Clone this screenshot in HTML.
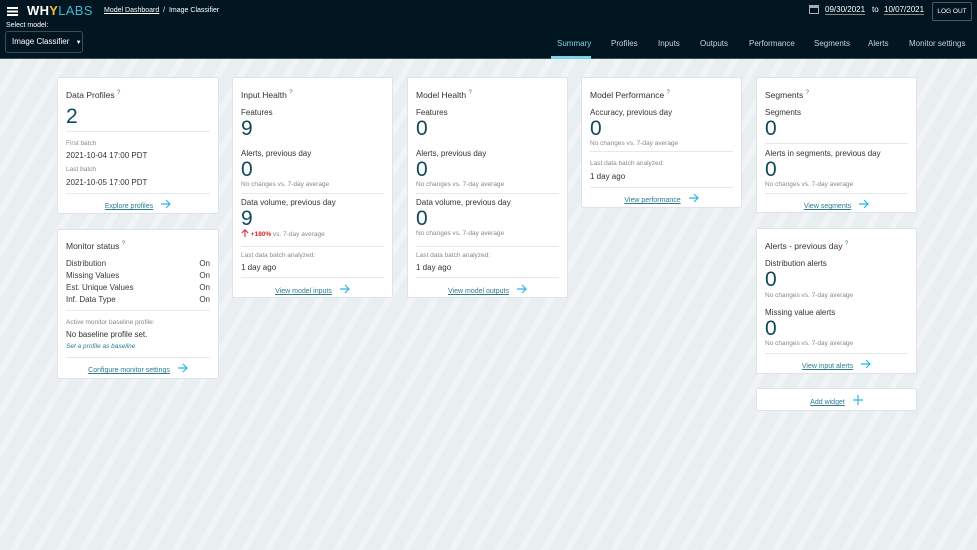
<!DOCTYPE html><html><head><style>
*{margin:0;padding:0;box-sizing:border-box}
body{width:977px;height:550px;overflow:hidden;font-family:"Liberation Sans",sans-serif;background:#e9eff1;position:relative;color:#3a3a3a}
.bg{position:absolute;left:0;top:59px;width:977px;height:491px;background:repeating-linear-gradient(120deg,rgba(255,255,255,0) 0 14px,rgba(255,255,255,.35) 14px 20px)}
.hd{position:absolute;left:0;top:0;width:977px;height:59px;background:#021621;border-bottom:1px solid #3c4d56;color:#fff}
.a{position:absolute;white-space:nowrap}
.card{position:absolute;background:#fff;border:1px solid #dde3e6;border-radius:2px}
.t{font-size:8.5px;line-height:12px;color:#333}
.t sup{color:#2d7c8f;font-size:6px}
.n{font-size:21px;line-height:24px;color:#0f4a59;font-weight:300}
.l{font-size:8px;line-height:10px;color:#333}
.s{font-size:6.5px;line-height:10px;color:#888}
.hr{position:absolute;left:8px;right:8px;height:1px;background:#e3e9eb}
.lk{position:absolute;left:0;right:0;text-align:center;font-size:7px;line-height:10px;color:#2d7c8f}
.lk u{text-decoration:underline}
.lk svg{margin-left:8px;vertical-align:-1px}
.row{position:absolute;left:8px;right:8px;font-size:8px;line-height:10px;display:flex;justify-content:space-between}
.nav{position:absolute;top:39px;font-size:8px;color:#c7d0d4}
</style></head><body>
<svg width="0" height="0" style="position:absolute"><defs><symbol id="ar" viewBox="0 0 10 10"><path d="M0 5H9M5 1L9 5L5 9" fill="none" stroke="#2cb5e8" stroke-width="1.2"/></symbol></defs></svg>
<div class="bg"></div>
<div class="hd">
<div class="a" style="left:7px;top:7px;width:11px;height:1.5px;background:#fff;box-shadow:0 3.5px #fff,0 7px #fff"></div>
<div class="a" style="left:27px;top:3px;font-size:13px;font-weight:bold;letter-spacing:.3px">WH<span style="color:#f2c22e">Y</span><span style="color:#3fb6d2;font-weight:normal">LABS</span></div>
<div class="a" style="left:104px;top:7px;font-size:7px"><u>Model Dashboard</u> &nbsp;/&nbsp; Image Classifier</div>
<div class="a" style="left:6px;top:22px;font-size:7px">Select model:</div>
<div class="a" style="left:5px;top:31px;width:78px;height:22px;border:1px solid #3c4d56;border-radius:3px;font-size:8px;line-height:20px;padding-left:6px">Image Classifier <span style="font-size:6px;margin-left:4px">▼</span></div>
<div class="a" style="left:809px;top:5px;width:10px;height:9px;border:1.5px solid #aab;border-top-width:3px"></div>
<div class="a" style="left:825px;top:5px;font-size:8px;border-bottom:1px solid #888">09/30/2021</div>
<div class="a" style="left:872px;top:5px;font-size:8px">to</div>
<div class="a" style="left:884px;top:5px;font-size:8px;border-bottom:1px solid #888">10/07/2021</div>
<div class="a" style="left:932px;top:2px;width:40px;height:19px;border:1px solid #556;border-radius:2px;font-size:6.5px;line-height:17px;text-align:center">LOG OUT</div>
<div class="a nav" style="left:557px;color:#7fd3e8">Summary</div>
<div class="a" style="left:551px;top:56px;width:40px;height:3px;background:#7fd3e8"></div>
<div class="a nav" style="left:611px">Profiles</div>
<div class="a nav" style="left:658px">Inputs</div>
<div class="a nav" style="left:700px">Outputs</div>
<div class="a nav" style="left:749px">Performance</div>
<div class="a nav" style="left:814px">Segments</div>
<div class="a nav" style="left:868px">Alerts</div>
<div class="a nav" style="left:909px">Monitor settings</div>
</div>

<div class="card" style="left:57px;top:77px;width:162px;height:137px">
<div class="a t" style="left:8px;top:9px">Data Profiles <sup>?</sup></div>
<div class="a n" style="left:8px;top:27px">2</div>
<div class="hr" style="top:53px"></div>
<div class="a s" style="left:8px;top:61px">First batch</div>
<div class="a l" style="left:8px;top:73px">2021-10-04 17:00 PDT</div>
<div class="a s" style="left:8px;top:87px">Last batch</div>
<div class="a l" style="left:8px;top:100px">2021-10-05 17:00 PDT</div>
<div class="hr" style="top:115px"></div>
<div class="lk" style="top:121px"><u>Explore profiles</u><svg width="10" height="10"><use href="#ar"/></svg></div>
</div>

<div class="card" style="left:57px;top:229px;width:162px;height:150px">
<div class="a t" style="left:8px;top:8px">Monitor status <sup>?</sup></div>
<div class="row" style="top:29px"><span>Distribution</span><span>On</span></div>
<div class="row" style="top:41px"><span>Missing Values</span><span>On</span></div>
<div class="row" style="top:53px"><span>Est. Unique Values</span><span>On</span></div>
<div class="row" style="top:65px"><span>Inf. Data Type</span><span>On</span></div>
<div class="hr" style="top:80px"></div>
<div class="a s" style="left:8px;top:88px">Active monitor baseline profile:</div>
<div class="a l" style="left:8px;top:100px">No baseline profile set.</div>
<div class="a s" style="left:8px;top:112px;color:#2d7c8f;font-style:italic">Set a profile as baseline</div>
<div class="hr" style="top:127px"></div>
<div class="lk" style="top:133px"><u>Configure monitor settings</u><svg width="10" height="10"><use href="#ar"/></svg></div>
</div>

<div class="card" style="left:232px;top:77px;width:161px;height:221px">
<div class="a t" style="left:8px;top:9px">Input Health <sup>?</sup></div>
<div class="a l" style="left:8px;top:30px">Features</div>
<div class="a n" style="left:8px;top:39px">9</div>
<div class="a l" style="left:8px;top:71px">Alerts, previous day</div>
<div class="a n" style="left:8px;top:80px">0</div>
<div class="a s" style="left:8px;top:102px">No changes vs. 7-day average</div>
<div class="hr" style="top:115px"></div>
<div class="a l" style="left:8px;top:120px">Data volume, previous day</div>
<div class="a n" style="left:8px;top:129px">9</div>
<div class="a s" style="left:8px;top:151px"><span style="color:#d8262c;font-weight:bold"><svg width="8" height="8" viewBox="0 0 10 10" style="vertical-align:-1px"><path d="M5 10V1M1 5L5 1L9 5" fill="none" stroke="#d8262c" stroke-width="1.3"/></svg> +180%</span> vs. 7-day average</div>
<div class="hr" style="top:168px"></div>
<div class="a s" style="left:8px;top:173px">Last data batch analyzed:</div>
<div class="a l" style="left:8px;top:185px">1 day ago</div>
<div class="hr" style="top:199px"></div>
<div class="lk" style="top:206px"><u>View model inputs</u><svg width="10" height="10"><use href="#ar"/></svg></div>
</div>

<div class="card" style="left:407px;top:77px;width:161px;height:221px">
<div class="a t" style="left:8px;top:9px">Model Health <sup>?</sup></div>
<div class="a l" style="left:8px;top:30px">Features</div>
<div class="a n" style="left:8px;top:39px">0</div>
<div class="a l" style="left:8px;top:71px">Alerts, previous day</div>
<div class="a n" style="left:8px;top:80px">0</div>
<div class="a s" style="left:8px;top:102px">No changes vs. 7-day average</div>
<div class="hr" style="top:115px"></div>
<div class="a l" style="left:8px;top:120px">Data volume, previous day</div>
<div class="a n" style="left:8px;top:129px">0</div>
<div class="a s" style="left:8px;top:151px">No changes vs. 7-day average</div>
<div class="hr" style="top:168px"></div>
<div class="a s" style="left:8px;top:173px">Last data batch analyzed:</div>
<div class="a l" style="left:8px;top:185px">1 day ago</div>
<div class="hr" style="top:199px"></div>
<div class="lk" style="top:206px"><u>View model outputs</u><svg width="10" height="10"><use href="#ar"/></svg></div>
</div>

<div class="card" style="left:581px;top:77px;width:161px;height:131px">
<div class="a t" style="left:8px;top:9px">Model Performance <sup>?</sup></div>
<div class="a l" style="left:8px;top:30px">Accuracy, previous day</div>
<div class="a n" style="left:8px;top:39px">0</div>
<div class="a s" style="left:8px;top:61px">No changes vs. 7-day average</div>
<div class="hr" style="top:73px"></div>
<div class="a s" style="left:8px;top:81px">Last data batch analyzed:</div>
<div class="a l" style="left:8px;top:94px">1 day ago</div>
<div class="hr" style="top:109px"></div>
<div class="lk" style="top:115px"><u>View performance</u><svg width="10" height="10"><use href="#ar"/></svg></div>
</div>

<div class="card" style="left:756px;top:77px;width:161px;height:136px">
<div class="a t" style="left:8px;top:9px">Segments <sup>?</sup></div>
<div class="a l" style="left:8px;top:30px">Segments</div>
<div class="a n" style="left:8px;top:39px">0</div>
<div class="hr" style="top:65px"></div>
<div class="a l" style="left:8px;top:71px">Alerts in segments, previous day</div>
<div class="a n" style="left:8px;top:80px">0</div>
<div class="a s" style="left:8px;top:102px">No changes vs. 7-day average</div>
<div class="hr" style="top:115px"></div>
<div class="lk" style="top:121px"><u>View segments</u><svg width="10" height="10"><use href="#ar"/></svg></div>
</div>

<div class="card" style="left:756px;top:228px;width:161px;height:146px">
<div class="a t" style="left:8px;top:9px">Alerts - previous day <sup>?</sup></div>
<div class="a l" style="left:8px;top:30px">Distribution alerts</div>
<div class="a n" style="left:8px;top:39px">0</div>
<div class="a s" style="left:8px;top:62px">No changes vs. 7-day average</div>
<div class="a l" style="left:8px;top:79px">Missing value alerts</div>
<div class="a n" style="left:8px;top:88px">0</div>
<div class="a s" style="left:8px;top:110px">No changes vs. 7-day average</div>
<div class="hr" style="top:124px"></div>
<div class="lk" style="top:130px"><u>View input alerts</u><svg width="10" height="10"><use href="#ar"/></svg></div>
</div>

<div class="card" style="left:756px;top:388px;width:161px;height:23px">
<div class="lk" style="top:6px"><u>Add widget</u><svg width="10" height="10" viewBox="0 0 10 10"><path d="M5 0V10M0 5H10" stroke="#2cb5e8" stroke-width="1.2"/></svg></div>
</div>
</body></html>
